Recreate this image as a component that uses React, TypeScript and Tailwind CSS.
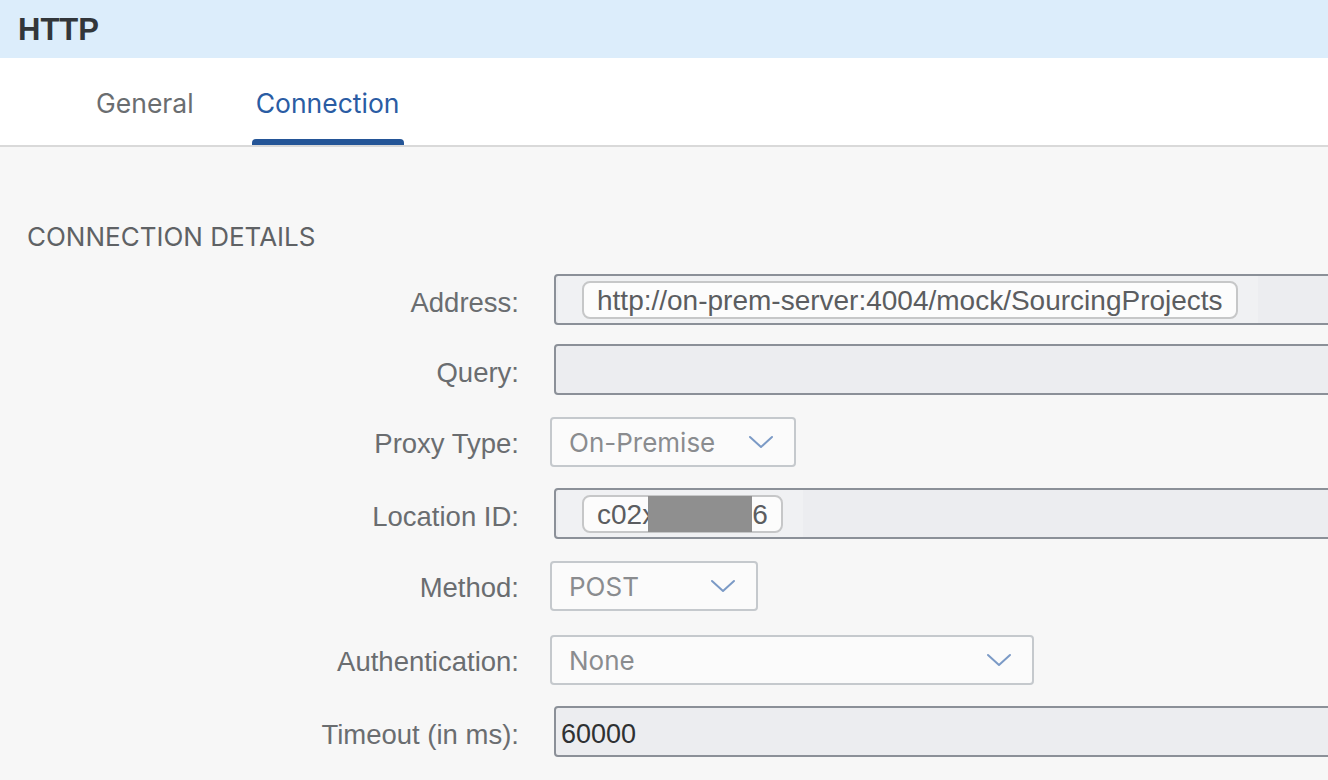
import React from "react";

function Chevron() {
  return (
    <svg width="26" height="14" viewBox="0 0 26 14" fill="none">
      <path d="M2 2 L13 12 L24 2" stroke="#7b9ac6" strokeWidth="2" strokeLinecap="round" strokeLinejoin="round" />
    </svg>
  );
}

function Label({ children, sel }: { children: React.ReactNode; sel?: boolean }) {
  return (
    <div
      className={sel ? "w-[519px] shrink-0 pt-[3px] text-right text-[27.5px] text-[#6a6d70]" : "w-[519px] shrink-0 pt-[6px] text-right text-[27.5px] text-[#6a6d70]"}
      style={{ fontFamily: '"Liberation Sans", Arial, sans-serif' }}
    >
      {children}
    </div>
  );
}

function TextBox({ children }: { children?: React.ReactNode }) {
  return (
    <div className="ml-[35px] flex-1 -mr-[10px] h-full rounded-[4px] border-2 border-[#8b9098] bg-[#ecedf0] flex items-center">
      {children}
    </div>
  );
}

function Chip({ children }: { children: React.ReactNode }) {
  return (
    <div className="ml-[2px] flex h-full items-center bg-[#f0f1f3] pl-[24px] pr-[20px]">
      <div className="flex h-[38px] items-center rounded-[8px] border-2 border-[#c6c7c8] bg-[#fcfcfc] px-[13px] pt-[2px] text-[28px] text-[#5b5d60]" style={{ fontFamily: '"Liberation Sans", Arial, sans-serif' }}>
        {children}
      </div>
    </div>
  );
}

function Select({ width, text, chevronRight }: { width: number; text: string; chevronRight: number }) {
  return (
    <div
      className="ml-[31px] relative h-full rounded-[4px] border-2 border-[#c5c9cd] bg-[#fbfbfb] flex items-center pl-[17px] text-[26px] text-[#8a8c8f]"
      style={{ width, fontFamily: 'Inter, "Noto Sans", sans-serif' }}
    >
      {text}
      <div className="absolute top-1/2 -translate-y-1/2" style={{ right: chevronRight }}>
        <Chevron />
      </div>
    </div>
  );
}

export default function App() {
  return (
    <div className="w-[1328px] h-[780px] overflow-hidden bg-[#f7f7f7]">
      <div className="h-[58px] bg-[#dcedfb] flex items-center pl-[18px]">
        <span className="text-[31px] font-bold text-[#32363a] leading-none" style={{ fontFamily: '"Liberation Sans", Arial, sans-serif' }}>
          HTTP
        </span>
      </div>
      <div className="h-[89px] bg-white border-b-2 border-[#d9d9d9] flex items-end pl-[96px]" style={{ fontFamily: 'Inter, "Noto Sans", sans-serif' }}>
        <div className="flex items-end gap-0">
          <div className="h-[88px] flex items-center text-[26.5px] text-[#6a6d70] pt-[6px]">General</div>
          <div className="ml-[58px] relative h-[88px] w-[152px] flex items-center justify-center pt-[6px] text-[26.5px] text-[#2a5ca3]">
            Connection
            <div className="absolute bottom-0 left-0 right-0 h-[6px] rounded-t-[4px] bg-[#245597]" />
          </div>
        </div>
      </div>
      <div className="pt-[74px] pl-[27px]">
        <div className="text-[26px] text-[#5f6265] leading-[32px]" style={{ fontFamily: 'Inter, "Noto Sans", sans-serif' }}>
          CONNECTION DETAILS
        </div>
      </div>
      <div className="flex flex-col">
        <div className="mt-[21px] flex items-center h-[51px]">
          <Label>Address:</Label>
          <TextBox>
            <Chip>http://on-prem-server:4004/mock/SourcingProjects</Chip>
          </TextBox>
        </div>
        <div className="mt-[19px] flex items-center h-[51px]">
          <Label>Query:</Label>
          <TextBox />
        </div>
        <div className="mt-[22px] flex items-center h-[50px]">
          <Label sel>Proxy Type:</Label>
          <Select width={246} text="On-Premise" chevronRight={20} />
        </div>
        <div className="mt-[21px] flex items-center h-[51px]">
          <Label>Location ID:</Label>
          <TextBox>
            <Chip>
              <span>c02x</span>
              <span className="inline-block w-[104px] h-[36px] bg-[#8f8f8f] -ml-[8px] -mt-[2px]" />
              <span>6</span>
            </Chip>
          </TextBox>
        </div>
        <div className="mt-[22px] flex items-center h-[50px]">
          <Label sel>Method:</Label>
          <Select width={208} text="POST" chevronRight={20} />
        </div>
        <div className="mt-[24px] flex items-center h-[50px]">
          <Label sel>Authentication:</Label>
          <Select width={484} text="None" chevronRight={20} />
        </div>
        <div className="mt-[21px] flex items-center h-[51px]">
          <Label>Timeout (in ms):</Label>
          <TextBox>
            <span className="pl-[5px] pt-[5px] text-[27px] text-[#2f3133]" style={{ fontFamily: '"Liberation Sans", Arial, sans-serif' }}>60000</span>
          </TextBox>
        </div>
      </div>
    </div>
  );
}
